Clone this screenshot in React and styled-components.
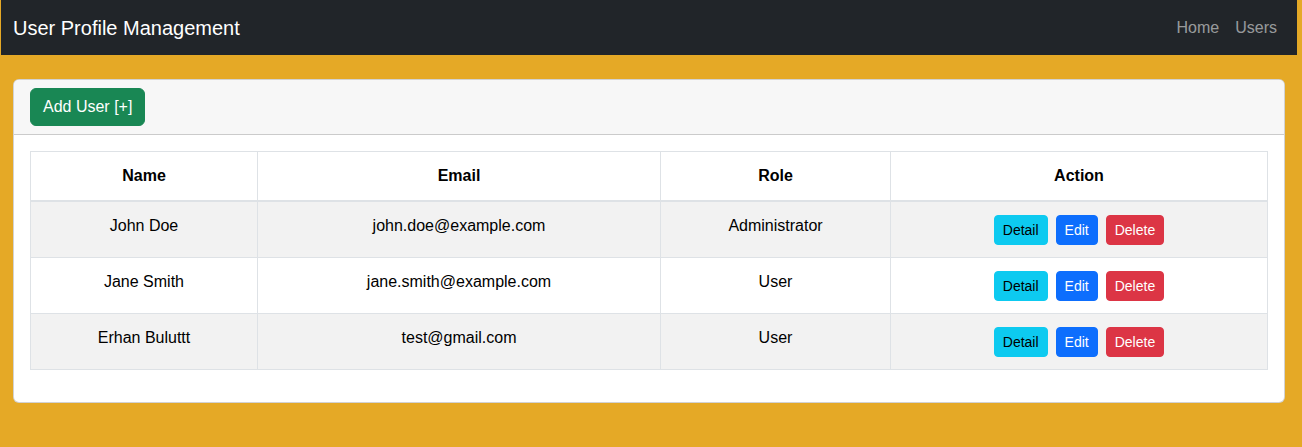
import React from "react";
import styled, { createGlobalStyle } from "styled-components";

const users = [
  { name: "John Doe", email: "john.doe@example.com", role: "Administrator" },
  { name: "Jane Smith", email: "jane.smith@example.com", role: "User" },
  { name: "Erhan Buluttt", email: "test@gmail.com", role: "User" },
];

const App = () => {
  return (
    <Page>
      <GlobalStyle />
      <Navbar>
        <Brand>User Profile Management</Brand>
        <NavLinks>
          <NavLink>Home</NavLink>
          <NavLink>Users</NavLink>
        </NavLinks>
      </Navbar>
      <Main>
        <Card>
          <CardHeader>
            <AddButton>Add User [+]</AddButton>
          </CardHeader>
          <CardBody>
            <Table>
              <thead>
                <tr>
                  <Th width={202}>Name</Th>
                  <Th width={378}>Email</Th>
                  <Th width={205}>Role</Th>
                  <Th>Action</Th>
                </tr>
              </thead>
              <tbody>
                {users.map((u, i) => (
                  <Row key={u.email} $striped={i % 2 === 0}>
                    <Td>{u.name}</Td>
                    <Td>{u.email}</Td>
                    <Td>{u.role}</Td>
                    <Td>
                      <Actions>
                        <SmallButton $variant="info">Detail</SmallButton>
                        <SmallButton $variant="primary">Edit</SmallButton>
                        <SmallButton $variant="danger">Delete</SmallButton>
                      </Actions>
                    </Td>
                  </Row>
                ))}
              </tbody>
            </Table>
          </CardBody>
        </Card>
      </Main>
    </Page>
  );
};

const GlobalStyle = createGlobalStyle`
  body {
    margin: 0;
    background: #e5a926;
    font-family: "Liberation Sans", Arial, sans-serif;
    font-size: 16px;
    line-height: 1.5;
    color: #212529;
  }
`;

const Page = styled.div`
  padding: 0 5px 0 1px;
  min-height: 447px;
`;

const Navbar = styled.nav`
  height: 55px;
  box-sizing: border-box;
  background: #212529;
  display: flex;
  align-items: center;
  justify-content: space-between;
  padding: 0 12px;
`;

const Brand = styled.span`
  color: #fff;
  font-size: 20px;
  line-height: 30px;
`;

const NavLinks = styled.div`
  display: flex;
`;

const NavLink = styled.a`
  color: rgba(255, 255, 255, 0.55);
  padding: 0 8px;
  line-height: 24px;
  cursor: pointer;
  &:last-child {
    padding-right: 0;
    margin-right: 8px;
  }
`;

const Main = styled.main`
  padding: 24px 12px 0;
`;

const Card = styled.div`
  background: #fff;
  border: 1px solid rgba(0, 0, 0, 0.175);
  border-radius: 6px;
  overflow: hidden;
`;

const CardHeader = styled.div`
  background: #f7f7f7;
  border-bottom: 1px solid rgba(0, 0, 0, 0.175);
  padding: 8px 16px;
  display: flex;
`;

const AddButton = styled.button`
  font-family: inherit;
  font-size: 16px;
  line-height: 24px;
  color: #fff;
  background: #198754;
  border: 1px solid #198754;
  border-radius: 6px;
  padding: 6px 12px;
  cursor: pointer;
`;

const CardBody = styled.div`
  padding: 16px 16px 32px;
`;

const Table = styled.table`
  width: 100%;
  border-collapse: collapse;
  border: 1px solid #dee2e6;
  text-align: center;
  color: #000;
`;

const Th = styled.th`
  font-weight: bold;
  padding: 12px;
  border: 1px solid #dee2e6;
  border-bottom: 2px solid #dee2e6;
  line-height: 24px;
  width: ${({ width }) => (width ? `${width}px` : "auto")};
`;

const Row = styled.tr`
  background: ${({ $striped }) => ($striped ? "#f2f2f2" : "#fff")};
`;

const Td = styled.td`
  padding: 12px;
  border: 1px solid #dee2e6;
  vertical-align: top;
  line-height: 24px;
`;

const Actions = styled.div`
  display: flex;
  justify-content: center;
  gap: 8px;
  margin-top: 1px;
`;

const colors = {
  info: { bg: "#0dcaf0", fg: "#000" },
  primary: { bg: "#0d6efd", fg: "#fff" },
  danger: { bg: "#dc3545", fg: "#fff" },
};

const SmallButton = styled.button`
  font-family: inherit;
  font-size: 14px;
  line-height: 20px;
  padding: 4px 8px;
  border-radius: 4px;
  border: 1px solid ${({ $variant }) => colors[$variant].bg};
  background: ${({ $variant }) => colors[$variant].bg};
  color: ${({ $variant }) => colors[$variant].fg};
  cursor: pointer;
`;

export default App;
